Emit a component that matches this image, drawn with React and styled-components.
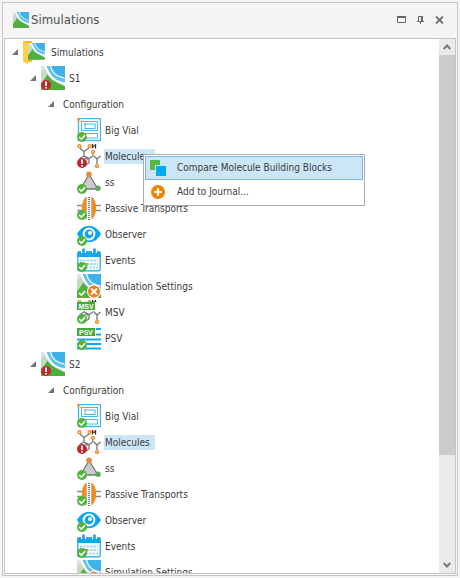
import React, { useState } from "react";
import styled, { createGlobalStyle } from "styled-components";

const GlobalStyle = createGlobalStyle`
  *, *::before, *::after { box-sizing: border-box; }
  body {
    margin: 0;
    background: #f5f5f5;
    color: #3c3c3c;
    font: 10px/15px "DejaVu Sans Condensed", "DejaVu Sans", sans-serif;
  }
  button { font: inherit; color: inherit; }
`;

const Page = styled.div`
  display: flex;
  height: 100vh;
  padding: 2px;
`;

const Panel = styled.section`
  display: flex;
  flex: 1;
  flex-direction: column;
  min-width: 0;
  padding: 0 1px 1px;
  border: 1px solid #c6c6c6;
`;

const Header = styled.header`
  display: flex;
  flex: none;
  align-items: center;
  gap: 2px;
  height: 35px;
  padding: 0 8px 2px 9px;
`;

const Title = styled.h1`
  flex: 1;
  margin: 0;
  font-size: 13px;
  line-height: 20px;
  font-weight: 400;
  color: #505050;
`;

const PlainButton = styled.button`
  display: grid;
  place-items: center;
  flex: none;
  padding: 0;
  border: 0;
  background: none;
`;

const HeaderButton = styled(PlainButton)`
  width: 17px;
  height: 17px;
`;

const Content = styled.div`
  display: flex;
  flex: 1;
  min-height: 0;
  border: 1px solid #c6c6c6;
  background: #ffffff;
`;

const Tree = styled.ul`
  flex: 1;
  min-width: 0;
  margin: 0;
  padding: 0;
  overflow-y: auto;
  scrollbar-width: none;
  list-style: none;
`;

const Branch = styled.ul`
  margin: 0;
  padding: 0 0 0 18px;
  list-style: none;
`;

const Row = styled.div`
  display: flex;
  align-items: center;
  height: 26px;
  padding-left: 6px;
`;

const Expander = styled(PlainButton)`
  width: 8px;
  height: 16px;
  margin-right: 4px;
`;

const Spacer = styled.span`
  flex: none;
  width: 12px;
`;

const Glyph = styled.svg`
  display: block;
  flex: none;
`;

const LabelAnchor = styled.span`
  position: relative;
  margin-left: 3px;
`;

const Label = styled.span`
  display: block;
  padding: 0 5px 0 1px;
  white-space: nowrap;
  background: ${(p) => (p.$selected ? "#cde6f7" : "transparent")};
`;

const Menu = styled.div`
  position: absolute;
  z-index: 2;
  top: 5px;
  left: 39px;
  width: 222px;
  padding: 1px;
  border: 1px solid #ababab;
  background: #ffffff;
`;

const MenuItem = styled.button`
  display: flex;
  align-items: center;
  gap: 11px;
  width: 100%;
  height: 24px;
  padding: 0 4px;
  border: 1px solid ${(p) => (p.$active ? "#7eb4ea" : "transparent")};
  background: ${(p) => (p.$active ? "#cde6f7" : "transparent")};
  line-height: 15px;
  text-align: left;
  white-space: nowrap;
`;

const ScrollBar = styled.div`
  display: flex;
  flex: none;
  flex-direction: column;
  width: 16px;
  background: #eaeaea;
`;

const ScrollButton = styled(PlainButton)`
  width: 16px;
  height: 16px;
`;

const Thumb = styled.div`
  flex: 400;
  background: #cbcbcb;
`;

const Track = styled.div`
  flex: 102;
`;

function Landscape() {
  return (
    <>
      <rect width="24" height="24" fill="#dfe3e1" />
      <path d="M0 7 L3 3 L7 9 L0 18Z" fill="#c3dcbf" />
      <path d="M3 0 C7 8 10 14 24 19 V0Z" fill="#fff" />
      <path d="M0 24 V18 L6.5 8.5 C10 14.5 16 16.5 24 20.5 V24Z" fill="#4fae3c" />
      <path d="M5.5 0 C9 8 12 14.5 24 16.5 V0Z" fill="#5cc1ef" />
      <path d="M9.5 0 C10 5 14 10.5 24 12" fill="none" stroke="#fff" strokeWidth="1.2" />
      <path d="M11 0 C12 5 16 10 24 11.5 V0Z" fill="#3fb2ea" />
    </>
  );
}

function Check() {
  return (
    <>
      <circle cx="5" cy="19" r="5" fill="#54b440" />
      <path d="M2.2 19 L4.4 21.2 L8 17.2" fill="none" stroke="#fff" strokeWidth="1.6" />
    </>
  );
}

function ErrorMark() {
  return (
    <>
      <circle cx="5" cy="19" r="5" fill="#c4262b" />
      <path d="M5 15.5 V20 M5 21 V22.6" stroke="#fff" strokeWidth="1.8" />
    </>
  );
}

function Atoms() {
  return (
    <>
      <g fill="none" stroke="#777" strokeWidth="1.3">
        <path d="M3 4 L7 7.5 L12 4 M7 7.5 V12 L3 14.5 V20 M7 12 L12 14.5 V19 L7 22 M8 13.8 L11 15.5 M12 14.5 L16 12 M16 9.5 V12 M17 12 L20 15 L23.5 12 M20 15 V20" />
      </g>
      <g fill="none" stroke="#f18a1b" strokeWidth="1.4">
        <circle cx="2.4" cy="2.2" r="1.4" />
        <circle cx="12.5" cy="2.2" r="1.4" />
        <circle cx="16" cy="7.8" r="1.4" />
        <circle cx="20" cy="22" r="1.4" />
      </g>
      <path d="M15.5 0 V4.5 M18.5 0 V4.5 M15.5 2.2 H18.5" stroke="#333" strokeWidth="1.3" />
    </>
  );
}

/* Banner lettering for the MSV and PSV icons. */
function Banner({ children }) {
  return (
    <g transform="translate(0 2)">
      <rect width="19" height="9" fill="#fff" />
      <rect width="18" height="8" fill="#45aa35" />
      <text x="9" y="6.5" fill="#fff" textAnchor="middle" fontFamily="Liberation Sans, sans-serif" fontWeight="700" fontSize="7">
        {children}
      </text>
    </g>
  );
}

const drawings = {
  simulation: <Landscape />,
  simulationError: <><Landscape /><ErrorMark /></>,
  folder: (
    <>
      <path d="M0 1 H9 V22 L0 22Z" fill="#f5ba22" />
      <path d="M0 1 L5 4 V24 L0 22Z" fill="#ffd04a" />
      <g transform="translate(5 3) scale(.7)"><Landscape /></g>
    </>
  ),
  vial: (
    <>
      <g fill="none" stroke="#45b9ee">
        <rect x="1.5" y=".5" width="22" height="22" strokeWidth="1.4" />
        <rect x="4.5" y="3.5" width="16" height="9" />
        <rect x="8" y="6" width="10" height="4.5" />
        <path d="M4 15.5 H20.5 V20 H8" />
      </g>
      <g fill="#f39227"><circle cx="1.5" cy="1.5" r="1.4" /><circle cx="4.5" cy="3.5" r="1.1" /><circle cx="8" cy="6" r="1" /></g>
      <Check />
    </>
  ),
  molecules: <><Atoms /><ErrorMark /></>,
  reaction: (
    <>
      <path d="M12 4.5 L3.5 19 H21Z" fill="#c9cbcc" stroke="#777" strokeWidth="1.3" />
      <circle cx="12" cy="4.4" r="2.8" fill="#e28c3d" />
      <circle cx="21" cy="18.3" r="2.7" fill="#55a956" />
      <Check />
    </>
  ),
  transport: (
    <>
      <path d="M0 9.5 H24 M0 14.5 H24" stroke="#8d8d8d" strokeWidth="1.3" />
      <path d="M10.5 0 C3 3 3 21 10.5 24Z M13.5 0 C21 3 21 21 13.5 24Z" fill="#f28c1e" />
      <rect x="9.5" width="5" height="24" fill="#fff" />
      <path d="M12 1 V24" stroke="#777" strokeWidth="2" strokeDasharray="1 1" />
      <path d="M9.5 1 V23 M14.5 1 V23" stroke="#aaa" strokeWidth=".6" />
      <Check />
    </>
  ),
  observer: (
    <>
      <path d="M0 12 C6 1 18 1 24 12 C18 23 6 23 0 12Z" fill="#0ba6ea" />
      <circle cx="12" cy="12" r="6.4" fill="#fff" />
      <circle cx="12" cy="12" r="4.4" fill="#0ba6ea" />
      <circle cx="13" cy="11" r="2" fill="#fff" />
      <Check />
    </>
  ),
  events: (
    <>
      <rect x=".8" y="3.8" width="22.4" height="19" rx="1.5" fill="#fff" stroke="#10a8e9" strokeWidth="1.2" />
      <path d="M.5 9 V4.5 Q.5 3.5 1.5 3.5 H22.5 Q23.5 3.5 23.5 4.5 V9Z" fill="#10a8e9" />
      <path d="M6.5 .5 V5 M17.5 .5 V5" stroke="#fff" strokeWidth="5" />
      <path d="M6.5 1.5 V5 M17.5 1.5 V5" stroke="#10a8e9" strokeWidth="2.6" strokeLinecap="round" />
      <path d="M3 12.5 H21 M3 16 H21 M9 19.5 H21" stroke="#9cd9f4" strokeWidth="2" strokeDasharray="2.4 1" />
      <path d="M7 15.5 H10 V18" fill="none" stroke="#e77b28" strokeWidth="1.2" />
      <Check />
    </>
  ),
  settings: (
    <>
      <Landscape />
      <circle cx="17" cy="17.5" r="7" fill="#fff" />
      <circle cx="17" cy="17.5" r="6" fill="#ee7c16" />
      <path d="M14 14.5 L20 20.5 M20 14.5 L14 20.5" stroke="#fff" strokeWidth="2" />
      <Check />
    </>
  ),
  msv: <><Atoms /><Banner>MSV</Banner><Check /></>,
  psv: (
    <>
      <path d="M0 3 H24 M0 8.5 H24 M0 13.5 H24 M0 18 H24 M0 22.5 H24" stroke="#12aaee" strokeWidth="2" />
      <Banner>PSV</Banner>
      <Check />
    </>
  ),
};

function Icon({ name, size = 24 }) {
  return <Glyph width={size} height={size} viewBox="0 0 24 24" aria-hidden="true">{drawings[name]}</Glyph>;
}

const parts = [
  ["Big Vial", "vial"],
  ["Molecules", "molecules"],
  ["ss", "reaction"],
  ["Passive Transports", "transport"],
  ["Observer", "observer"],
  ["Events", "events"],
  ["Simulation Settings", "settings"],
  ["MSV", "msv"],
  ["PSV", "psv"],
].map(([label, icon]) => ({ label, icon, selected: label === "Molecules" }));

const simulation = (name, hasMenu) => ({
  label: name,
  icon: "simulationError",
  children: [
    {
      label: "Configuration",
      children: parts.map((part) => ({ ...part, menu: hasMenu && part.selected })),
    },
  ],
});

const root = {
  label: "Simulations",
  icon: "folder",
  children: [simulation("S1", true), simulation("S2", false)],
};

function ContextMenu() {
  return (
    <Menu role="menu">
      <MenuItem role="menuitem" $active>
        <Glyph width="16" height="16" viewBox="0 0 16 16" aria-hidden="true">
          <path d="M0 0 H10 V10 H0Z" fill="#55b947" />
          <path d="M5 5 H16 V16 H5Z" fill="#cde6f7" />
          <path d="M6 6 H16 V16 H6Z" fill="#00aeef" />
        </Glyph>
        Compare Molecule Building Blocks
      </MenuItem>
      <MenuItem role="menuitem">
        <Glyph width="16" height="16" viewBox="0 0 16 16" aria-hidden="true">
          <circle cx="8" cy="8" r="7" fill="#f08300" />
          <path d="M8 4 V12 M4 8 H12" stroke="#fff" strokeWidth="2" />
        </Glyph>
        Add to Journal...
      </MenuItem>
    </Menu>
  );
}

function TreeNode({ node }) {
  const [open, setOpen] = useState(true);
  return (
    <li role="treeitem" aria-expanded={node.children ? open : undefined}>
      <Row>
        {node.children ? (
          <Expander aria-label={`Toggle ${node.label}`} onClick={() => setOpen(!open)}>
            <Glyph width="8" height="8" viewBox="0 0 8 8"><path d="M7 1 V7 H1Z" fill="#747474" /></Glyph>
          </Expander>
        ) : (
          <Spacer />
        )}
        {node.icon && <Icon name={node.icon} />}
        <LabelAnchor>
          <Label $selected={node.selected}>{node.label}</Label>
          {node.menu && <ContextMenu />}
        </LabelAnchor>
      </Row>
      {node.children && open && (
        <Branch role="group">
          {node.children.map((child) => <TreeNode key={child.label} node={child} />)}
        </Branch>
      )}
    </li>
  );
}

export default function App() {
  return (
    <>
      <GlobalStyle />
      <Page>
        <Panel>
          <Header>
            <Icon name="simulation" size={16} />
            <Title>Simulations</Title>
            <HeaderButton aria-label="Maximize">
              <Glyph width="9" height="7" viewBox="0 0 9 7"><path d="M.5 1 H8.5 V6.5 H.5Z" fill="none" stroke="#666" /><path d="M0 1 H9" stroke="#666" strokeWidth="2" /></Glyph>
            </HeaderButton>
            <HeaderButton aria-label="Pin">
              <Glyph width="7" height="8" viewBox="0 0 7 8"><path d="M1.5 5 V.5 H5.5 V5 M0 5.5 H7 M3.5 6 V8" fill="none" stroke="#666" /><path d="M4 0 H6 V5 H4Z" fill="#666" /></Glyph>
            </HeaderButton>
            <HeaderButton aria-label="Close">
              <Glyph width="9" height="8" viewBox="0 0 9 8"><path d="M1 .5 L8 7.5 M8 .5 L1 7.5" stroke="#707070" strokeWidth="1.8" /></Glyph>
            </HeaderButton>
          </Header>
          <Content>
            <Tree role="tree" aria-label="Simulations">
              <TreeNode node={root} />
            </Tree>
            <ScrollBar>
              <ScrollButton aria-label="Scroll up">
                <Glyph width="8" height="6" viewBox="0 0 8 6"><path d="M.7 5 L4 1.5 L7.3 5" fill="none" stroke="#777" strokeWidth="2" /></Glyph>
              </ScrollButton>
              <Thumb />
              <Track />
              <ScrollButton aria-label="Scroll down">
                <Glyph width="8" height="6" viewBox="0 0 8 6"><path d="M.7 1 L4 4.5 L7.3 1" fill="none" stroke="#777" strokeWidth="2" /></Glyph>
              </ScrollButton>
            </ScrollBar>
          </Content>
        </Panel>
      </Page>
    </>
  );
}
